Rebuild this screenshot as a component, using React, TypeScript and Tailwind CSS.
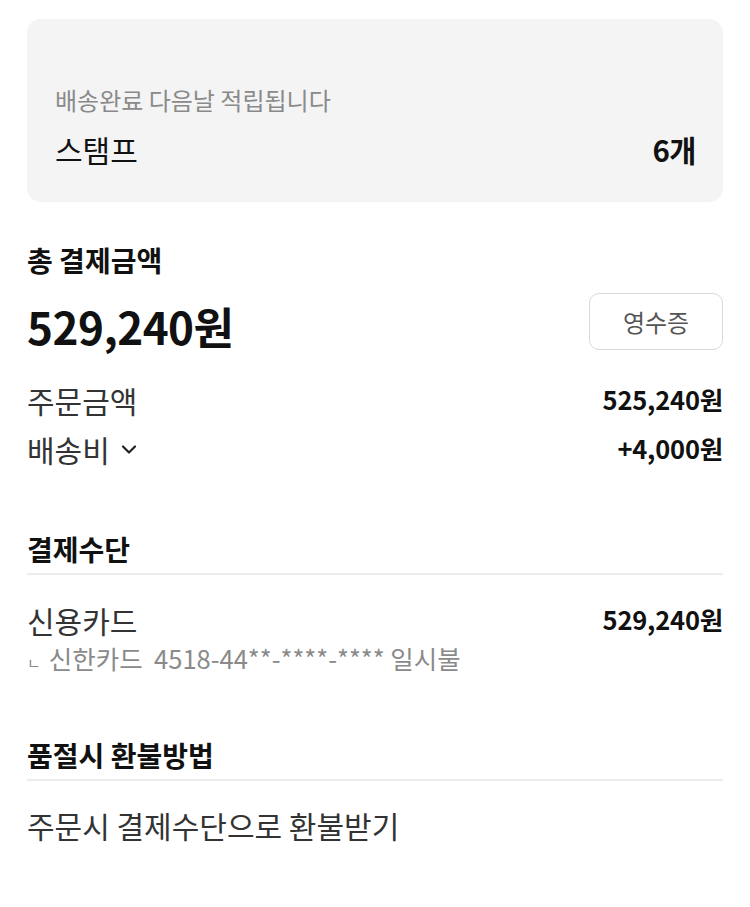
import React from 'react';

// Order payment summary
const font = { fontFamily: '"Noto Sans CJK KR", "Noto Sans", sans-serif' };

const Row = ({ label, value, chevron }: { label: string; value: string; chevron?: boolean }) => (
  <div className="flex items-center justify-between h-[49px]">
    <div className="flex items-center gap-[10px] text-[30px] text-[#333] leading-[40px]">
      {label}
      {chevron && (
        <svg width="18" height="18" viewBox="0 0 18 18" fill="none" className="mt-[1px]">
          <path d="M3 6.5l6 6 6-6" stroke="#222" strokeWidth="2.2" strokeLinecap="round" strokeLinejoin="round" />
        </svg>
      )}
    </div>
    <div className="text-[25.5px] font-bold text-[#111] tracking-[-0.2px]">{value}</div>
  </div>
);

const SectionTitle = ({ children }: { children: React.ReactNode }) => (
  <div className="text-[28px] font-bold text-[#111] leading-[36px] pb-[6px] border-b-2 border-[#ececec]">{children}</div>
);

export default function App() {
  return (
    <div className="w-[750px] min-h-[907px] bg-white px-[27px] pt-[19px]" style={font}>
      <div className="rounded-[14px] bg-[#f4f4f4] h-[183px] px-[28px] pt-[66px]">
        <div className="text-[24px] text-[#8a8a8a] leading-[30px]">배송완료 다음날 적립됩니다</div>
        <div className="flex items-center justify-between mt-[16px] leading-[36px]">
          <span className="text-[30px] text-[#111]">스탬프</span>
          <span className="text-[29.5px] font-bold text-[#111] tracking-[-0.5px] mr-[-1px]">6개</span>
        </div>
      </div>

      <div className="mt-[40px] text-[28px] font-bold text-[#111] leading-[36px]">총 결제금액</div>
      <div className="flex items-center justify-between mt-[15px]">
        <div className="text-[44px] font-bold text-[#111] tracking-[-0.5px] leading-[58px]">529,240원</div>
        <button className="w-[134px] h-[57px] mb-[9px] rounded-[10px] border border-[#d9d9d9] bg-white text-[24px] text-[#555]">
          영수증
        </button>
      </div>

      <div className="mt-[16px]">
        <Row label="주문금액" value="525,240원" />
        <Row label="배송비" value="+4,000원" chevron />
      </div>

      <div className="mt-[58px]">
        <SectionTitle>결제수단</SectionTitle>
        <div className="mt-[20px]">
          <Row label="신용카드" value="529,240원" />
          <div className="text-[25.5px] text-[#8a8a8a] -mt-[3px] leading-[34px]">
            <span className="text-[15px] mr-[8px]">ㄴ</span>신한카드&nbsp;&nbsp;4518-44**-****-**** 일시불
          </div>
        </div>
      </div>

      <div className="mt-[57px]">
        <SectionTitle>품절시 환불방법</SectionTitle>
        <div className="mt-[24px] text-[30px] text-[#333] leading-[40px]">주문시 결제수단으로 환불받기</div>
      </div>
    </div>
  );
}
